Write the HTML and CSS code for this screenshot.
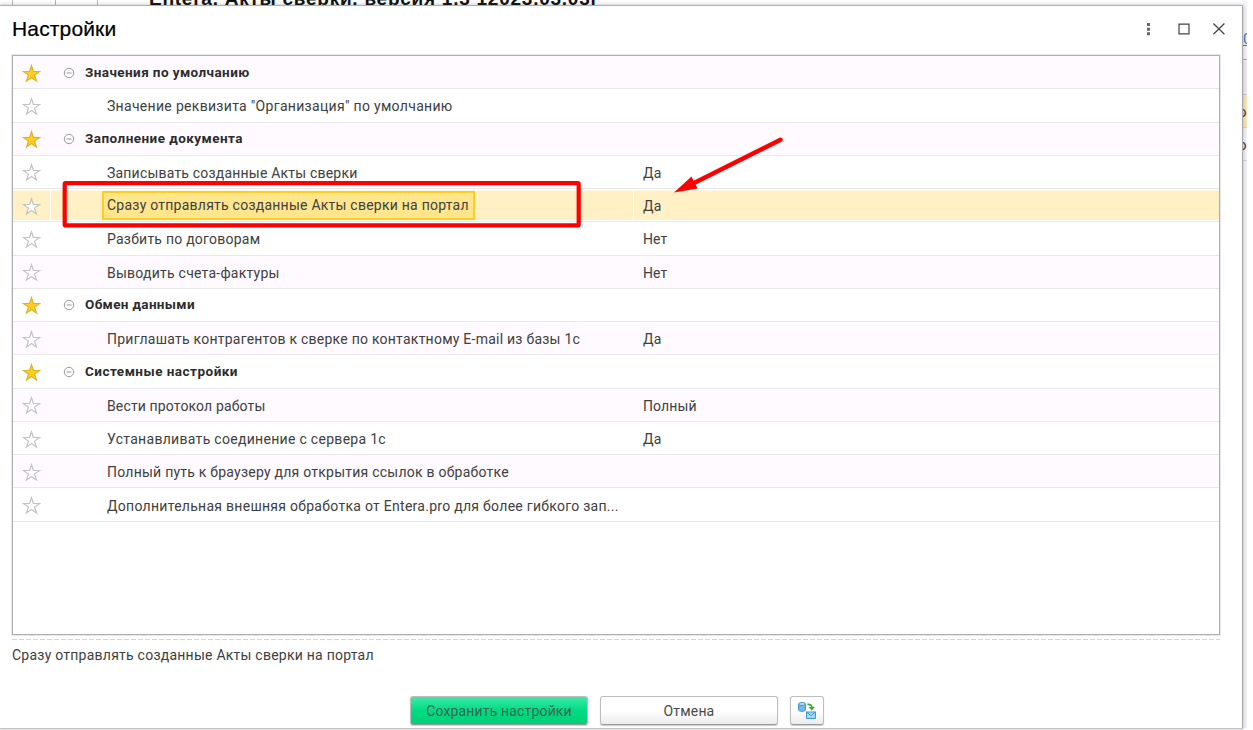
FILE: index.html
```html
<!DOCTYPE html>
<html lang="ru">
<head>
<meta charset="utf-8">
<title>Настройки</title>
<link rel="stylesheet" href="styles.css">
</head>
<body>
<svg class="defs" width="0" height="0">
  <symbol id="star" viewBox="0 0 20 20"><path d="M10 1.8 L12 7.9 H18.4 L13.2 11.7 L15.2 17.8 L10 14.1 L4.8 17.8 L6.8 11.7 L1.6 7.9 H8 Z"/></symbol>
  <symbol id="minus" viewBox="0 0 12 12"><circle cx="6" cy="6" r="4.7"/><path d="M3.5 6 H8.5"/></symbol>
</svg>
<div class="backdrop">
  <div class="back-nav"><i></i><i></i><i></i></div>
  <div class="back-title">Entera. Акты сверки. версия 1.3 12023.03.03г</div>
  <div class="back-side">
    <div class="side-link">0</div>
    <div class="side-head"></div>
    <div class="side-cell side-selected">о</div>
    <div class="side-cell">о</div>
  </div>
</div>
<main class="dialog">
  <header class="titlebar">
    <h1>Настройки</h1>
    <div class="window-tools">
      <svg width="20" height="20" viewBox="0 0 20 20"><path class="dots" d="M8 4h3v3h-3zM8 8.8h3v3h-3zM8 13.2h3v3h-3z"/></svg>
      <svg width="20" height="20" viewBox="0 0 20 20"><path class="line" d="M5 5.2h10v9.6H5z"/></svg>
      <svg width="20" height="20" viewBox="0 0 20 20"><path class="line" d="M4.4 4.5 L15.4 15.3 M15.4 4.5 L4.4 15.3"/></svg>
    </div>
  </header>
  <section class="grid">
    <div class="row group"><svg class="star on"><use href="#star"/></svg><div class="name"><svg class="minus"><use href="#minus"/></svg><span class="t1">Значения по умолчанию</span></div><div class="value"></div></div>
    <div class="row"><svg class="star"><use href="#star"/></svg><div class="name"><span class="t2">Значение реквизита "Организация" по умолчанию</span></div><div class="value"></div></div>
    <div class="row group"><svg class="star on"><use href="#star"/></svg><div class="name"><svg class="minus"><use href="#minus"/></svg><span class="t3">Заполнение документа</span></div><div class="value"></div></div>
    <div class="row"><svg class="star"><use href="#star"/></svg><div class="name"><span class="t4">Записывать созданные Акты сверки</span></div><div class="value">Да</div></div>
    <div class="row selected"><svg class="star"><use href="#star"/></svg><div class="name"><span class="t5">Сразу отправлять созданные Акты сверки на портал</span></div><div class="value">Да</div></div>
    <div class="row"><svg class="star"><use href="#star"/></svg><div class="name"><span class="t6">Разбить по договорам</span></div><div class="value">Нет</div></div>
    <div class="row"><svg class="star"><use href="#star"/></svg><div class="name"><span class="t7">Выводить счета-фактуры</span></div><div class="value">Нет</div></div>
    <div class="row group"><svg class="star on"><use href="#star"/></svg><div class="name"><svg class="minus"><use href="#minus"/></svg><span class="t8">Обмен данными</span></div><div class="value"></div></div>
    <div class="row"><svg class="star"><use href="#star"/></svg><div class="name"><span class="t9">Приглашать контрагентов к сверке по контактному E-mail из базы 1с</span></div><div class="value">Да</div></div>
    <div class="row group"><svg class="star on"><use href="#star"/></svg><div class="name"><svg class="minus"><use href="#minus"/></svg><span class="t10">Системные настройки</span></div><div class="value"></div></div>
    <div class="row"><svg class="star"><use href="#star"/></svg><div class="name"><span class="t11">Вести протокол работы</span></div><div class="value">Полный</div></div>
    <div class="row"><svg class="star"><use href="#star"/></svg><div class="name"><span class="t12">Устанавливать соединение с сервера 1с</span></div><div class="value">Да</div></div>
    <div class="row"><svg class="star"><use href="#star"/></svg><div class="name"><span class="t13">Полный путь к браузеру для открытия ссылок в обработке</span></div><div class="value"></div></div>
    <div class="row"><svg class="star"><use href="#star"/></svg><div class="name"><span class="t14">Дополнительная внешняя обработка от Entera.pro для более гибкого зап...</span></div><div class="value"></div></div>
  </section>
  <div class="divider"></div>
  <p class="hint">Сразу отправлять созданные Акты сверки на портал</p>
  <footer class="actions">
    <button class="btn primary">Сохранить настройки</button>
    <button class="btn">Отмена</button>
    <button class="btn icon-btn">
      <svg width="20" height="20" viewBox="0 0 20 20">
        <path d="M1.5 3.2v5.6c0 2 7 2 7 0V3.2z" fill="#72b9e8" stroke="#4595cf"/>
        <ellipse cx="5" cy="3" rx="3.5" ry="1.5" fill="#b8e3fa" stroke="#4595cf"/>
        <path d="M10.5 3.4c3.2-.2 4.4 1.2 4.4 3.2" fill="none" stroke="#35ad2b" stroke-width="1.8"/>
        <path d="M11.5 6h6.3l-3 3.6z" fill="#35ad2b"/>
        <path d="M9.5 11h9v6.5h-9z" fill="#a7dcf8" stroke="#3b94d3"/>
        <path d="M9.5 11l4.5 3.6 4.5-3.6" fill="none" stroke="#3b94d3"/>
      </svg>
    </button>
  </footer>
</main>
<svg class="annotation" width="1253" height="730" viewBox="0 0 1253 730">
  <rect x="64.7" y="183.2" width="514" height="42.2" rx="1"/>
  <path class="shaft" d="M780.5 139.7 L692 184"/>
  <path class="head" d="M674 192.5 L691.5 176.5 L697.5 188.5 Z"/>
</svg>
</body>
</html>
```
FILE: styles.css
```css
* { box-sizing: border-box; }
body {
  margin: 0;
  width: 1253px;
  height: 730px;
  overflow: hidden;
  position: relative;
  background: #fff;
  font: 14px/16px Roboto, "Liberation Sans", sans-serif;
  color: #404040;
}
.defs { position: absolute; }
.backdrop { position: absolute; inset: 0; overflow: hidden; background: #fff; }
.back-nav { position: absolute; left: 12px; top: 0; height: 5px; width: 86px; display: flex; justify-content: space-between; }
.back-nav i { width: 1px; background: #b5b5b5; }
.back-title {
  position: absolute; left: 149px; top: -13px;
  font: bold 19px/24px "Liberation Sans", sans-serif;
  color: #111; white-space: nowrap; letter-spacing: 0.75px;
}
.back-side { position: absolute; left: 1243px; top: 0; width: 4px; height: 728px; overflow: hidden; background: #f5f3f6; font-size: 15px; }
.side-link { margin-top: 30px; height: 29px; line-height: 18px; color: #2f78d0; text-decoration: underline; }
.side-head { height: 36px; border-top: 1px solid #b3aeb5; border-bottom: 1px solid #ccc; background: #f1eaf2; }
.side-cell { height: 33px; line-height: 34px; border-bottom: 1px solid #d8d4da; text-indent: -5px; }
.side-selected { background: #fbe7b2; }
.dialog {
  position: relative;
  width: 1243px; height: 724px; margin-top: 5px;
  padding: 0 22px 0 12px;
  background: #fff;
  border-top: 1px solid #b1adb2;
  border-right: 1px solid #aaa6ab;
  border-bottom: 1px solid #c4c4c4;
  box-shadow: 0 0 4px rgba(70, 60, 75, .35);
  display: flex; flex-direction: column;
}
.titlebar { height: 49px; flex: none; display: flex; justify-content: space-between; align-items: flex-start; }
h1 { margin: 10px 0 0; font: 21px/26px "Liberation Sans", sans-serif; color: #000; letter-spacing: .15px; -webkit-text-stroke: .2px #000; }
.window-tools { display: flex; gap: 15px; padding-top: 13px; margin-right: -9px; }
.window-tools svg { display: block; }
.dots { fill: #666; }
.line { fill: none; stroke: #444; stroke-width: 1.2; }
.grid { height: 580px; flex: none; border: 1px solid #aeaeb0; box-shadow: 0 0 0 .4px #c6c6c8; }
.row {
  height: 33.27px;
  display: grid; grid-template-columns: 38px 592px 1fr;
  align-items: center;
  border-bottom: 1.4px solid #e9e8ea;
}
.row:nth-child(odd) { background: #fefaff; }
.star { width: 19px; height: 19px; margin: 2px 0 0 9px; fill: #fff; stroke: #c4c4c4; stroke-width: 1.3; }
.star.on { fill: #ffce1f; stroke: #e2b425; }
.name { height: 100%; display: flex; align-items: center; padding: 2px 0 0 56px; white-space: nowrap; letter-spacing: .24px; }
.value { padding-top: 2px; letter-spacing: .1px; }
.group .name { padding: 0 0 1px 12px; font-size: 13.5px; font-weight: 700; letter-spacing: .41px; color: #2c2c2c; }
.minus { width: 12px; height: 12px; margin-right: 10px; fill: #fff; stroke: #999; stroke-width: 1; position: relative; top: 1px; }
.t2 { letter-spacing: .31px; }
.t3 { letter-spacing: .45px; }
.t4 { letter-spacing: .2px; }
.t8 { letter-spacing: .34px; }
.t10 { letter-spacing: .48px; }
.t11 { letter-spacing: .14px; }
.t12 { letter-spacing: .3px; }
.t14 { letter-spacing: .28px; }
.row.selected { background: linear-gradient(#fff, #fff) 37px 0 / 1px 100% no-repeat, linear-gradient(#fff, #fff) 620px 0 / 1px 100% no-repeat, #fff0c5; box-shadow: inset 0 1.5px #fff, inset 0 -1px #fff; }
.selected .name { padding: 1px 0 0 51px; }
.selected .name span { height: 29px; line-height: 25px; padding: 0 4px 0 3px; border: 2px solid #ffcc22; background: #ffe68c; }
.divider { height: 1px; margin-top: 4px; flex: none; background: repeating-linear-gradient(90deg, #d5d5d5 0 5px, transparent 5px 7px); }
.hint { margin: 7px 0 0; letter-spacing: .24px; }
.actions { display: flex; gap: 12px; margin: 33px 0 0 398px; }
.btn {
  width: 178px; height: 29px; padding: 0;
  border: 1px solid #bdbdbd; border-bottom-color: #999; border-radius: 3px;
  background: linear-gradient(#fff 50%, #ececee);
  font: inherit; color: #4a4a4a; letter-spacing: .16px;
  box-shadow: 0 1px 1px rgba(0, 0, 0, .2);
}
.primary { background: linear-gradient(#3ee9a6, #00dc83 50%, #00cf78); color: #3d6652; }
.icon-btn { width: 34px; display: grid; place-items: center; }
.annotation { position: absolute; left: 0; top: 0; pointer-events: none; }
.annotation rect { fill: none; stroke: #fe0000; stroke-width: 4.2; }
.shaft { stroke: #fe0000; stroke-width: 4.4; stroke-linecap: round; }
.head { fill: #fe0000; }
```
